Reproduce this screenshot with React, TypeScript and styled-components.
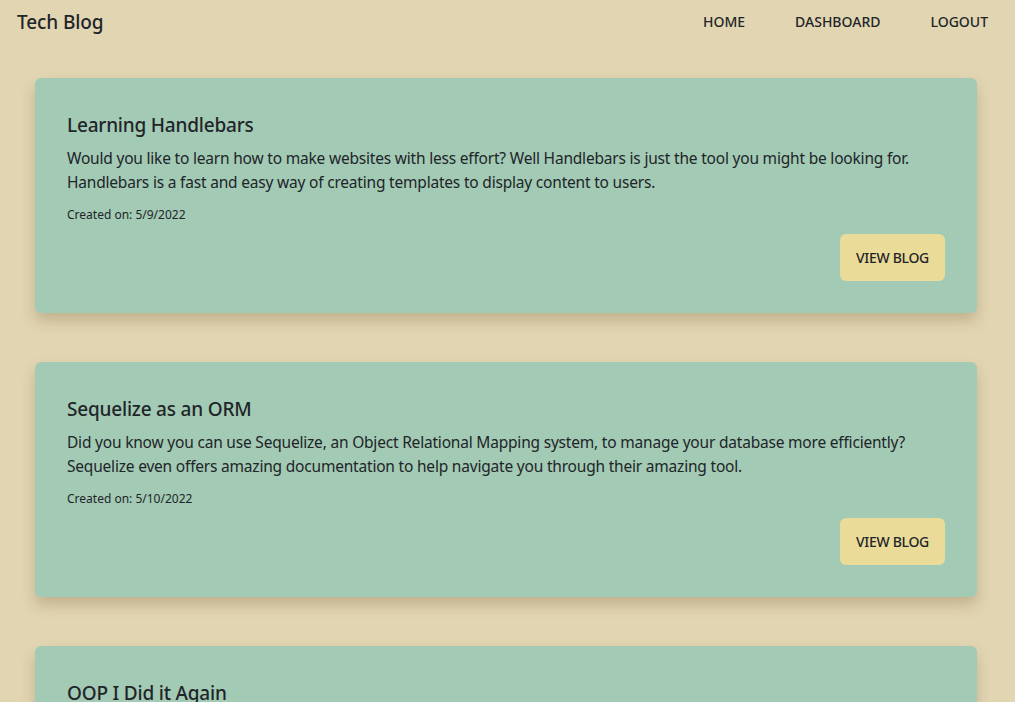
import React from "react";
import styled, { createGlobalStyle } from "styled-components";

const Global = createGlobalStyle`
  html, body { margin: 0; padding: 0; }
  body {
    background: #e2d5b2;
    font-family: "Noto Sans", "Open Sans", sans-serif;
    color: #212529;
    overflow: hidden;
  }
`;

const Header = styled.header`
  display: flex;
  align-items: center;
  justify-content: space-between;
  height: 43px;
  padding: 0 27px 0 17px;
`;

const Brand = styled.div`
  font-size: 19px;
  font-weight: 500;
  color: #212529;
  letter-spacing: -0.1px;
`;

const Nav = styled.nav`
  display: flex;
  gap: 50px;
`;

const NavLink = styled.a`
  font-size: 14px;
  font-weight: 500;
  text-transform: uppercase;
  color: #212529;
  text-decoration: none;
`;

const Main = styled.main`
  display: flex;
  flex-direction: column;
  gap: 49px;
  padding: 35px 38px 0 35px;
`;

const Card = styled.article`
  background: #a3cab4;
  border-radius: 6px;
  box-shadow: 0 8px 14px rgba(120, 100, 60, 0.3);
  padding: 32px;
  display: flex;
  flex-direction: column;
`;

const Title = styled.h2`
  margin: 0 0 6px;
  font-size: 19px;
  font-weight: 500;
  line-height: 30px;
  letter-spacing: -0.2px;
`;

const Body = styled.p`
  margin: 0;
  font-size: 15.5px;
  line-height: 24px;
  letter-spacing: -0.2px;
`;

const Meta = styled.small`
  display: block;
  margin-top: 12px;
  font-size: 12px;
  line-height: 18px;
`;

const Actions = styled.div`
  display: flex;
  justify-content: flex-end;
  margin-top: 10px;
`;

const Button = styled.button`
  background: #ebdb98;
  border: none;
  border-radius: 6px;
  height: 47px;
  padding: 0 16px;
  font-family: inherit;
  font-size: 14px;
  font-weight: 500;
  letter-spacing: -0.3px;
  color: #212529;
  text-transform: uppercase;
  cursor: pointer;
`;

const posts = [
  {
    title: "Learning Handlebars",
    body: "Would you like to learn how to make websites with less effort? Well Handlebars is just the tool you might be looking for. Handlebars is a fast and easy way of creating templates to display content to users.",
    date: "5/9/2022",
  },
  {
    title: "Sequelize as an ORM",
    body: "Did you know you can use Sequelize, an Object Relational Mapping system, to manage your database more efficiently? Sequelize even offers amazing documentation to help navigate you through their amazing tool.",
    date: "5/10/2022",
  },
  {
    title: "OOP I Did it Again",
    body: "Object oriented programming lets you organize code into classes and objects so that your programs are easier to reason about and extend.",
    date: "5/11/2022",
  },
];

export default function App() {
  return (
    <>
      <Global />
      <Header>
        <Brand>Tech Blog</Brand>
        <Nav>
          <NavLink href="#">Home</NavLink>
          <NavLink href="#">Dashboard</NavLink>
          <NavLink href="#">Logout</NavLink>
        </Nav>
      </Header>
      <Main>
        {posts.map((p) => (
          <Card key={p.title}>
            <Title>{p.title}</Title>
            <Body>{p.body}</Body>
            <Meta>Created on: {p.date}</Meta>
            <Actions>
              <Button>View Blog</Button>
            </Actions>
          </Card>
        ))}
      </Main>
    </>
  );
}
